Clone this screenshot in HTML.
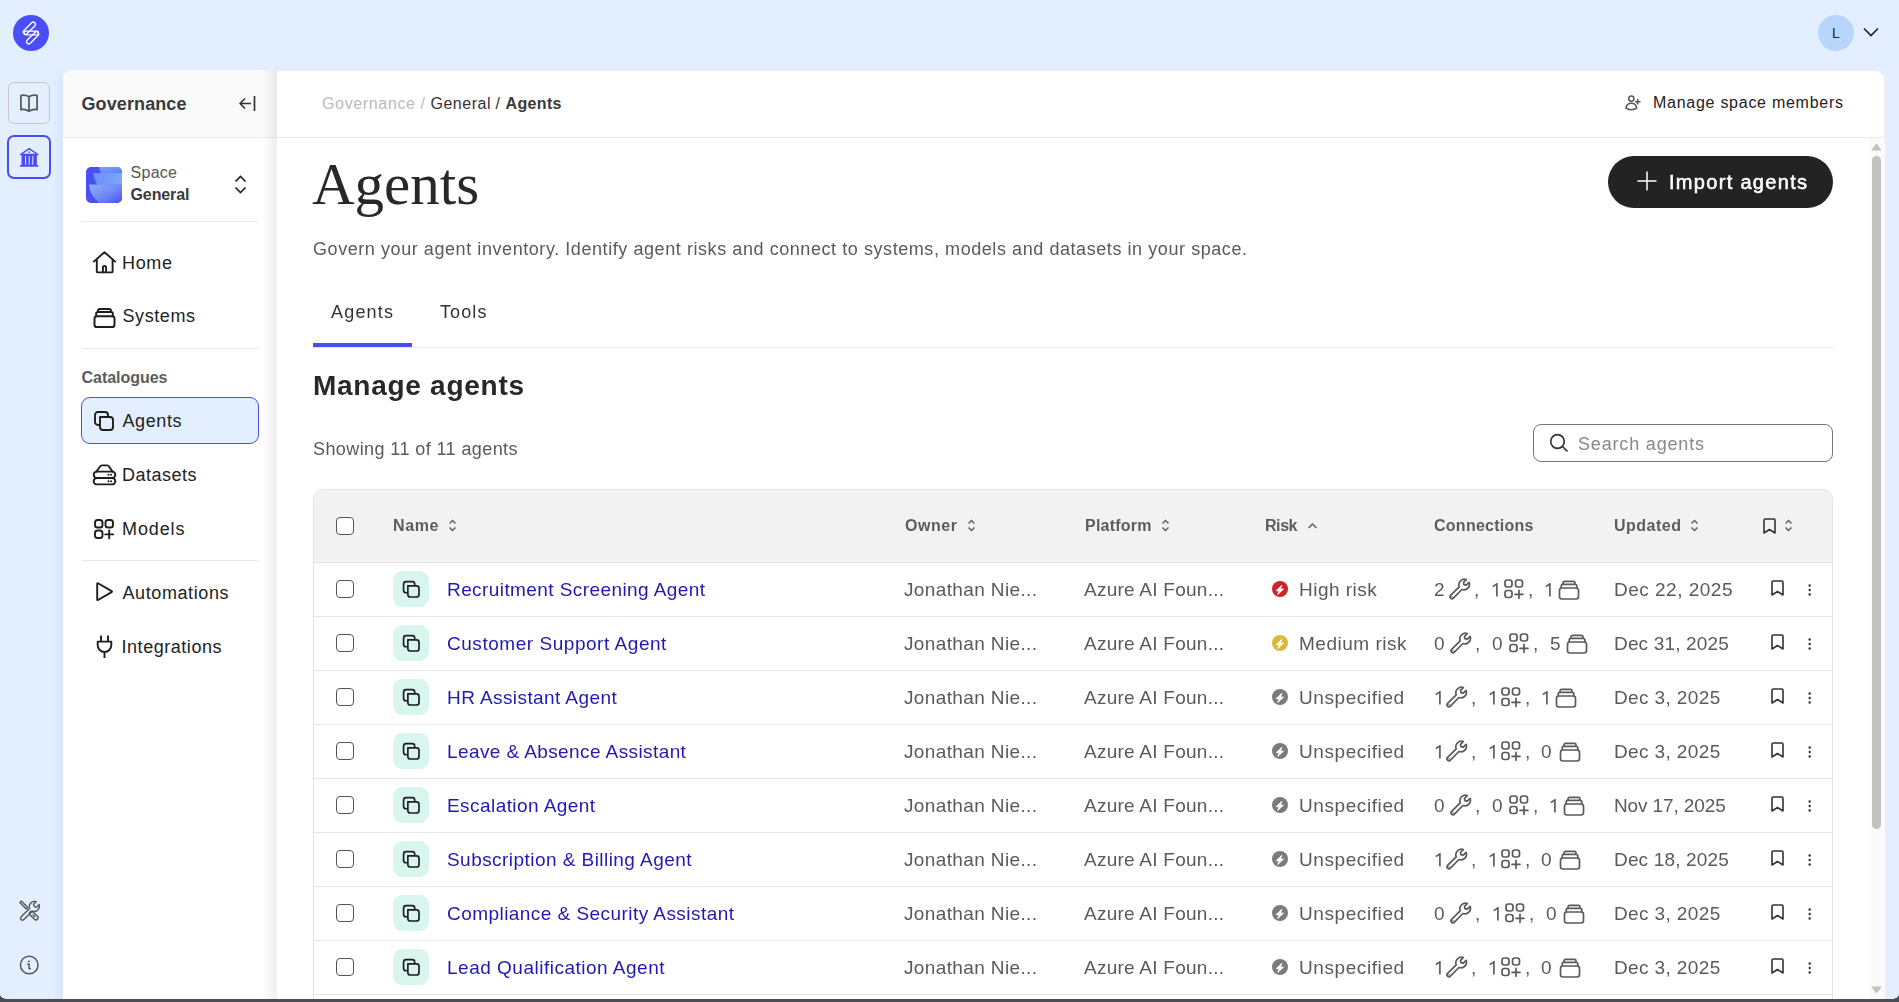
<!DOCTYPE html>
<html><head><meta charset="utf-8"><title>Agents</title>
<style>
html,body{margin:0;padding:0;}
body{width:1899px;height:1002px;overflow:hidden;position:relative;background:#e3effe;font-family:"Liberation Sans", sans-serif;}
.a{position:absolute;display:block;}
.t{position:absolute;white-space:nowrap;}
.g{will-change:transform;}
</style></head><body>
<div class="a" style="left:13px;top:15px;width:36px;height:36px;border-radius:50%;background:#4a4ef8;"></div>
<svg class="a" style="left:13px;top:15px;" width="36" height="36" viewBox="0 0 36 36" fill="none"><g stroke="#fff" stroke-width="1.3" fill="none" stroke-linejoin="round"><rect x="-2.2" y="-7.6" width="4.4" height="15.2" rx="2.2" transform="translate(16.4 13.2) rotate(45)"/><rect x="-2.2" y="-7.6" width="4.4" height="15.2" rx="2.2" transform="translate(19.6 22.8) rotate(45)"/><rect x="11" y="16.2" width="14.6" height="3.6" rx="1.8"/></g></svg>
<div class="a" style="left:8px;top:82px;width:42px;height:42px;box-sizing:border-box;border:1px solid #c8c5c2;border-radius:6px;"></div>
<svg class="a" style="left:18px;top:92px;" width="22" height="22" viewBox="0 0 22 22" fill="none"><path d="M2.9 3.5C5.6 2.9 8.4 3.2 11 4.8C13.6 3.2 16.4 2.9 19.1 3.5V17.6C16.4 17.1 13.6 17.5 11 19.2C8.4 17.5 5.6 17.1 2.9 17.6Z M11 4.8V19" stroke="#555" stroke-width="1.7" stroke-linejoin="round"/></svg>
<div class="a" style="left:7px;top:135px;width:44px;height:44px;box-sizing:border-box;border:2px solid #4a4cf5;border-radius:7px;"></div>
<svg class="a" style="left:18px;top:146px;" width="22" height="22" viewBox="0 0 22 22" fill="none"><path d="M2.6 8.5L11.2 2.7L19.8 8.5Z" stroke="#4a4cf5" stroke-width="1.5" stroke-linejoin="round"/><circle cx="11.2" cy="6.1" r=".95" fill="#4a4cf5"/><path d="M3.5 9H18.9V19.2H3.5Z" fill="#4a4cf5"/><path d="M7.6 10.4V18.4M11.2 10.4V18.4M14.8 10.4V18.4" stroke="#e3effe" stroke-width=".95" stroke-linecap="round"/><rect x="2" y="19" width="18.4" height="1.7" rx=".4" fill="#4a4cf5"/></svg>
<svg class="a" style="left:18px;top:899px;" width="22" height="24" viewBox="0 0 22 24" fill="none"><g stroke="#555" stroke-width="1.4" stroke-linejoin="round" fill="none"><path d="M1.8 3.6L3.4 2L9.8 8.4L8.2 10Z"/><rect x="-2.1" y="-5.2" width="4.2" height="10.4" rx="2.1" transform="translate(15.8 16.6) rotate(-45)"/><path d="M14.6 15.4L17.2 18"/><path d="M3.2 17.8L11.6 9.4C10.9 7.3 11.5 5 13.2 3.6C14.6 2.4 16.6 2.1 18.2 2.7L15.6 5.3L16.2 7.6L18.5 8.2L21.1 5.6C21.7 7.2 21.3 9.2 20.1 10.6C18.7 12.3 16.4 12.9 14.3 12.2L5.9 20.6C5.1 21.4 3.9 21.4 3.2 20.6C2.4 19.8 2.4 18.6 3.2 17.8Z"/></g></svg>
<svg class="a" style="left:18px;top:954px;" width="22" height="22" viewBox="0 0 22 22" fill="none"><circle cx="11.2" cy="11" r="8.8" stroke="#555" stroke-width="1.5"/><circle cx="10.9" cy="7.4" r="0.95" fill="#555"/><path d="M9.6 10.3H11.1V14.2C11.1 14.9 11.6 15 12.3 14.6" stroke="#555" stroke-width="1.4" stroke-linecap="round" stroke-linejoin="round"/></svg>
<div class="a" style="left:1818px;top:15px;width:36px;height:36px;border-radius:50%;background:#b8d6fc;"></div>
<div class="t" style="left:1832px;top:24.65px;font-size:14px;line-height:17px;font-weight:400;color:#222;">L</div>
<svg class="a" style="left:1862px;top:25px;" width="18" height="14" viewBox="0 0 18 14" fill="none"><path d="M2 3.5l7 7 7-7" stroke="#222" stroke-width="1.7"/></svg>
<div class="a" style="left:53px;top:68px;width:10px;height:940px;background:linear-gradient(90deg,rgba(90,140,240,0),rgba(90,140,240,.09));-webkit-mask-image:linear-gradient(180deg,transparent 0,#000 16px);"></div>
<div class="a" style="left:63px;top:69.5px;width:214px;height:940px;background:#fff;border-top-left-radius:9px;"></div>
<div class="a" style="left:63px;top:69.5px;width:214px;height:67.5px;background:#fafafa;border-top-left-radius:9px;"></div>
<div class="a" style="left:63px;top:137px;width:214px;height:1px;background:#e9e9e9;"></div>
<div class="a" style="left:262px;top:70px;width:15px;height:940px;background:linear-gradient(90deg,rgba(0,0,0,0),rgba(0,0,0,.065));"></div>
<div class="t" style="left:81.5px;top:92.76px;font-size:18px;line-height:22px;font-weight:700;color:#3a3a3a;letter-spacing:0.106px;">Governance</div>
<svg class="a" style="left:238px;top:95px;" width="19" height="17" viewBox="0 0 19 17" fill="none"><path d="M16.5 1v15" stroke="#333" stroke-width="1.7"/><path d="M2 8.5h11M7 3.5l-5 5 5 5" stroke="#333" stroke-width="1.6" stroke-linejoin="round"/></svg>
<svg class="a" style="left:86px;top:167px;" width="36" height="36" viewBox="0 0 36 36" fill="none"><defs><linearGradient id="sg1" x1="0" y1="0" x2="1" y2="1"><stop offset="0" stop-color="#7ea4f8"/><stop offset="1" stop-color="#5a7ef8"/></linearGradient><linearGradient id="sg3" x1="0" y1="0" x2="1" y2="0"><stop offset="0" stop-color="#6890f7"/><stop offset="1" stop-color="#7fa6f8"/></linearGradient><linearGradient id="sg2" x1="0" y1="0" x2="1" y2="1"><stop offset="0" stop-color="#8db2f8"/><stop offset=".55" stop-color="#6f88f6"/><stop offset="1" stop-color="#4a50f6"/></linearGradient><clipPath id="sc"><rect width="36" height="36" rx="5"/></clipPath></defs><g clip-path="url(#sc)"><rect width="36" height="36" fill="#4a4ff5"/><path d="M13 0H36V6H15C14 4 13.4 2 13 0Z" fill="url(#sg1)"/><path d="M7.2 5.9H36V17.7H11.2C9 14.5 7.6 10 7.2 5.9Z" fill="url(#sg3)"/><path d="M3 17.6H36V36H13.4C7.5 31.5 3.5 25 3 17.6Z" fill="url(#sg2)"/></g></svg>
<div class="t" style="left:130.5px;top:162.95px;font-size:16px;line-height:19px;font-weight:400;color:#555;letter-spacing:0.281px;">Space</div>
<div class="t" style="left:130.5px;top:185.45px;font-size:16px;line-height:19px;font-weight:700;color:#3a3a3a;letter-spacing:-0.099px;">General</div>
<svg class="a" style="left:233px;top:174px;" width="15" height="21" viewBox="0 0 15 21" fill="none"><path d="M2.5 7.5l5-5 5 5M2.5 13.5l5 5 5-5" stroke="#222" stroke-width="1.7"/></svg>
<div class="a" style="left:82px;top:221px;width:176px;height:1px;background:#e9e9e9;"></div>
<svg class="a" style="left:92px;top:250px;" width="26" height="26" viewBox="0 0 26 26" fill="none"><g stroke="#1e1e1e" stroke-width="1.9" stroke-linecap="round" stroke-linejoin="round" fill="none"><path d="M1.8 11.6L12.5 2.2L23.2 11.6M4.8 9.2V21.4a1 1 0 0 0 1 1H19.6a1 1 0 0 0 1-1V9.2"/><path d="M10.9 22.3V17.6a1.6 1.6 0 0 1 3.2 0V22.3"/></g></svg>
<div class="t" style="left:122px;top:251.76px;font-size:18px;line-height:22px;font-weight:400;color:#222;letter-spacing:0.661px;">Home</div>
<svg class="a" style="left:92px;top:304.5px;" width="25" height="25" viewBox="0 0 24 24" fill="none"><g stroke="#1e1e1e" stroke-width="1.9" stroke-linecap="round" stroke-linejoin="round" fill="none"><rect x="2.4" y="10.8" width="19.2" height="10.4" rx="2.3"/><path d="M4 10.8V8.4a1.6 1.6 0 0 1 1.6-1.6h12.8a1.6 1.6 0 0 1 1.6 1.6V10.8M5.8 6.8V5.4a1.6 1.6 0 0 1 1.6-1.6h9.2a1.6 1.6 0 0 1 1.6 1.6V6.8"/></g></svg>
<div class="t" style="left:122.5px;top:305.26px;font-size:18px;line-height:22px;font-weight:400;color:#222;letter-spacing:0.581px;">Systems</div>
<div class="a" style="left:82px;top:348px;width:176px;height:1px;background:#e9e9e9;"></div>
<div class="t" style="left:81.5px;top:367.95px;font-size:16px;line-height:19px;font-weight:700;color:#5c5c5c;letter-spacing:-0.028px;">Catalogues</div>
<div class="a" style="left:81px;top:397px;width:178px;height:47px;box-sizing:border-box;border:1px solid #4a4cf5;border-radius:9px;background:#e3effe;"></div>
<svg class="a" style="left:92px;top:409px;" width="24" height="24" viewBox="0 0 24 24" fill="none"><g stroke="#1e1e1e" stroke-width="1.9" stroke-linecap="round" stroke-linejoin="round" fill="none"><rect x="3" y="3" width="13" height="13" rx="3"/><path d="M8 8h10a3 3 0 0 1 3 3v7a3 3 0 0 1-3 3h-7a3 3 0 0 1-3-3z" fill="#e3effe"/></g></svg>
<div class="t" style="left:122.5px;top:409.76px;font-size:18px;line-height:22px;font-weight:400;color:#222;letter-spacing:0.591px;">Agents</div>
<svg class="a" style="left:92px;top:463px;" width="25" height="24" viewBox="0 0 25 24" fill="none"><g stroke="#1e1e1e" stroke-width="1.9" stroke-linecap="round" stroke-linejoin="round" fill="none"><path d="M4.4 8.6L8 3.5Q8.7 2.4 9.9 2.4H15.1Q16.3 2.4 17 3.5L20.6 8.6"/><rect x="1.7" y="8.6" width="21.6" height="6.4" rx="3.2"/><rect x="1.7" y="15" width="21.6" height="6.4" rx="3.2"/><g fill="#1e1e1e" stroke="none"><circle cx="16.5" cy="11.8" r="1.05"/><circle cx="19.1" cy="11.8" r="1.05"/><circle cx="16.5" cy="18.2" r="1.05"/><circle cx="19.1" cy="18.2" r="1.05"/></g></g></svg>
<div class="t" style="left:122px;top:463.76px;font-size:18px;line-height:22px;font-weight:400;color:#222;letter-spacing:0.493px;">Datasets</div>
<svg class="a" style="left:92px;top:517px;" width="24" height="24" viewBox="0 0 24 24" fill="none"><g stroke="#1e1e1e" stroke-width="1.9" stroke-linecap="round" stroke-linejoin="round" fill="none"><rect x="3" y="3" width="7.5" height="7.5" rx="2.6"/><rect x="13.5" y="3" width="7.5" height="7.5" rx="2.6"/><rect x="3" y="13.5" width="7.5" height="7.5" rx="2.6"/><path d="M17.2 13.4v8M13.2 17.4h8"/></g></svg>
<div class="t" style="left:122px;top:517.76px;font-size:18px;line-height:22px;font-weight:400;color:#222;letter-spacing:0.894px;">Models</div>
<div class="a" style="left:82px;top:560px;width:176px;height:1px;background:#e9e9e9;"></div>
<svg class="a" style="left:92px;top:580px;" width="24" height="24" viewBox="0 0 24 24" fill="none"><g stroke="#1e1e1e" stroke-width="1.9" stroke-linecap="round" stroke-linejoin="round" fill="none"><path d="M5.2 3.8Q5.2 2.9 6 3.3L19.6 11.1Q20.4 11.6 19.6 12.1L6 20Q5.2 20.4 5.2 19.5Z"/></g></svg>
<div class="t" style="left:122.5px;top:581.76px;font-size:18px;line-height:22px;font-weight:400;color:#222;letter-spacing:0.594px;">Automations</div>
<svg class="a" style="left:92px;top:634px;" width="25" height="25" viewBox="0 0 25 25" fill="none"><g stroke="#1e1e1e" stroke-width="1.9" stroke-linecap="round" stroke-linejoin="round" fill="none"><path d="M9 1.6v6M16 1.6v6M5.7 7.6h13.6v3.6a6.8 6.8 0 0 1-13.6 0zM12.5 18v6" stroke-linecap="butt"/></g></svg>
<div class="t" style="left:121.5px;top:635.76px;font-size:18px;line-height:22px;font-weight:400;color:#222;letter-spacing:0.54px;">Integrations</div>
<div class="a" style="left:277px;top:69.5px;width:1608px;height:940px;background:#fff;border-top-right-radius:9px;box-shadow:inset -1px 1px 0 #ededed;"></div>
<div class="a" style="left:277px;top:137px;width:1608px;height:1px;background:#e9e9e9;"></div>
<div class="t" style="left:322px;top:93.95px;font-size:16px;line-height:19px;font-weight:400;color:#bbb;letter-spacing:0.648px;">Governance</div>
<div class="t" style="left:420.5px;top:93.95px;font-size:16px;line-height:19px;font-weight:400;color:#bbb;">/</div>
<div class="t" style="left:430.5px;top:93.95px;font-size:16px;line-height:19px;font-weight:400;color:#333;letter-spacing:0.513px;">General</div>
<div class="t" style="left:495.5px;top:93.95px;font-size:16px;line-height:19px;font-weight:400;color:#333;">/</div>
<div class="t" style="left:505.5px;top:93.95px;font-size:16px;line-height:19px;font-weight:700;color:#3a3a3a;letter-spacing:0.353px;">Agents</div>
<svg class="a" style="left:1624px;top:94px;" width="18" height="18" viewBox="0 0 18 18" fill="none"><g stroke="#555" stroke-width="1.5" fill="none"><circle cx="7.3" cy="4.6" r="2.65"/><path d="M1.9 14.2C2.4 11 4.6 9.3 7.3 9.3S12.2 11 12.7 14.2C11 15.4 9.2 15.8 7.3 15.8S3.6 15.4 1.9 14.2Z" stroke-linejoin="round"/><path d="M13.75 5v5.6M10.95 7.8h5.6"/></g></svg>
<div class="t" style="left:1653px;top:92.95px;font-size:16px;line-height:19px;font-weight:400;color:#222;letter-spacing:0.732px;">Manage space members</div>
<div class="a" style="left:1869px;top:138px;width:16px;height:860px;background:#fafafa;"></div>
<svg class="a" style="left:1871px;top:143px;" width="11" height="8" viewBox="0 0 11 8" fill="none"><path d="M5.5 1L10 7H1z" fill="#c1c1c1" stroke="#c1c1c1" stroke-linejoin="round"/></svg>
<div class="a" style="left:1872px;top:156px;width:9px;height:673px;background:#c1c1c1;border-radius:4.5px;"></div>
<svg class="a" style="left:1871px;top:986px;" width="11" height="8" viewBox="0 0 11 8" fill="none"><path d="M1 1h9L5.5 7z" fill="#c1c1c1" stroke="#c1c1c1" stroke-linejoin="round"/></svg>
<div class="t g" style="left:312px;top:148.59px;font-size:59px;line-height:71px;font-weight:400;color:#282828;font-family:'Liberation Serif', serif;">Agents</div>
<div class="a" style="left:1608px;top:156px;width:225px;height:52px;background:#232323;border-radius:26px;"></div>
<svg class="a" style="left:1636.5px;top:171.4px;" width="20" height="20" viewBox="0 0 20 20" fill="none"><path d="M10 .5v19M.5 10h19" stroke="#fff" stroke-width="1.5"/></svg>
<div class="t g" style="left:1669px;top:170.07px;font-size:20px;line-height:24px;font-weight:400;color:#fff;letter-spacing:1.309px;-webkit-text-stroke:0.55px #fff;">Import agents</div>
<div class="t g" style="left:313px;top:237.76px;font-size:18px;line-height:22px;font-weight:400;color:#5a5a5a;letter-spacing:0.569px;">Govern your agent inventory. Identify agent risks and connect to systems, models and datasets in your space.</div>
<div class="t g" style="left:331px;top:300.76px;font-size:18px;line-height:22px;font-weight:400;color:#333;letter-spacing:1.191px;">Agents</div>
<div class="t g" style="left:439.5px;top:300.76px;font-size:18px;line-height:22px;font-weight:400;color:#333;letter-spacing:1.117px;">Tools</div>
<div class="a" style="left:313px;top:347px;width:1520px;height:1px;background:#e6e6e6;"></div>
<div class="a" style="left:313px;top:343px;width:99px;height:4px;background:#4a4cf5;"></div>
<div class="t g" style="left:313px;top:368.59px;font-size:28px;line-height:34px;font-weight:700;color:#282828;letter-spacing:0.727px;">Manage agents</div>
<div class="t g" style="left:313px;top:437.76px;font-size:18px;line-height:22px;font-weight:400;color:#5a5a5a;letter-spacing:0.41px;">Showing 11 of 11 agents</div>
<div class="a" style="left:1533px;top:424px;width:300px;height:38px;box-sizing:border-box;border:1px solid #777;border-radius:8px;"></div>
<svg class="a" style="left:1548px;top:432px;" width="22" height="22" viewBox="0 0 22 22" fill="none"><circle cx="9.5" cy="9.5" r="6.8" stroke="#333" stroke-width="1.7"/><path d="M14.5 14.5l5 5" stroke="#333" stroke-width="1.7"/></svg>
<div class="t g" style="left:1578px;top:432.76px;font-size:18px;line-height:22px;font-weight:400;color:#888;letter-spacing:0.827px;">Search agents</div>
<div class="a" style="left:313px;top:489px;width:1520px;height:560px;box-sizing:border-box;border:1px solid #e2e2e2;border-radius:10px;"></div>
<div class="a" style="left:314px;top:490px;width:1518px;height:72px;background:#f2f2f2;border-top-left-radius:9px;border-top-right-radius:9px;"></div>
<div class="a" style="left:314px;top:562px;width:1518px;height:1px;background:#e2e2e2;"></div>
<div class="a" style="left:336px;top:517px;width:18px;height:18px;box-sizing:border-box;border:1.5px solid #555;border-radius:4px;background:#fff;"></div>
<div class="t g" style="left:392.5px;top:516.45px;font-size:16px;line-height:19px;font-weight:700;color:#5c5c5c;letter-spacing:0.641px;">Name</div>
<svg class="a" style="left:448px;top:519px;" width="9" height="13" viewBox="0 0 9 13" fill="none"><path d="M1.5 4.5L4.5 1.5l3 3M1.5 8.5l3 3 3-3" stroke="#5a5a5a" stroke-width="1.4" fill="none"/></svg>
<div class="t g" style="left:904.5px;top:516.45px;font-size:16px;line-height:19px;font-weight:700;color:#5c5c5c;letter-spacing:0.551px;">Owner</div>
<svg class="a" style="left:967px;top:519px;" width="9" height="13" viewBox="0 0 9 13" fill="none"><path d="M1.5 4.5L4.5 1.5l3 3M1.5 8.5l3 3 3-3" stroke="#5a5a5a" stroke-width="1.4" fill="none"/></svg>
<div class="t g" style="left:1084.5px;top:516.45px;font-size:16px;line-height:19px;font-weight:700;color:#5c5c5c;letter-spacing:0.228px;">Platform</div>
<svg class="a" style="left:1161px;top:519px;" width="9" height="13" viewBox="0 0 9 13" fill="none"><path d="M1.5 4.5L4.5 1.5l3 3M1.5 8.5l3 3 3-3" stroke="#5a5a5a" stroke-width="1.4" fill="none"/></svg>
<div class="t g" style="left:1264.5px;top:516.45px;font-size:16px;line-height:19px;font-weight:700;color:#5c5c5c;letter-spacing:-0.432px;">Risk</div>
<svg class="a" style="left:1307px;top:521px;" width="11" height="9" viewBox="0 0 11 9" fill="none"><path d="M1.5 7l4-4 4 4" stroke="#5a5a5a" stroke-width="1.4" fill="none"/></svg>
<div class="t g" style="left:1433.5px;top:516.45px;font-size:16px;line-height:19px;font-weight:700;color:#5c5c5c;letter-spacing:0.261px;">Connections</div>
<div class="t g" style="left:1613.5px;top:516.45px;font-size:16px;line-height:19px;font-weight:700;color:#5c5c5c;letter-spacing:0.5px;">Updated</div>
<svg class="a" style="left:1690px;top:519px;" width="9" height="13" viewBox="0 0 9 13" fill="none"><path d="M1.5 4.5L4.5 1.5l3 3M1.5 8.5l3 3 3-3" stroke="#5a5a5a" stroke-width="1.4" fill="none"/></svg>
<svg class="a" style="left:1762px;top:518px;" width="15" height="17" viewBox="0 0 15 17" fill="none"><path d="M2 2.2a1.2 1.2 0 0 1 1.2-1.2h8.6a1.2 1.2 0 0 1 1.2 1.2V15L7.5 11.5 2 15z" stroke="#333" stroke-width="1.6" stroke-linejoin="round" fill="none"/></svg>
<svg class="a" style="left:1784px;top:519px;" width="9" height="13" viewBox="0 0 9 13" fill="none"><path d="M1.5 4.5L4.5 1.5l3 3M1.5 8.5l3 3 3-3" stroke="#5a5a5a" stroke-width="1.4" fill="none"/></svg>
<div class="a" style="left:314px;top:616px;width:1518px;height:1px;background:#e6e6e6;"></div>
<div class="a" style="left:336px;top:580px;width:18px;height:18px;box-sizing:border-box;border:1.5px solid #555;border-radius:4px;background:#fff;"></div>
<div class="a" style="left:393px;top:571px;width:36px;height:36px;background:#d8f5ee;border-radius:9px;"></div>
<svg class="a" style="left:400.8px;top:578.8px;" width="20.6" height="20.6" viewBox="0 0 24 24" fill="none"><g stroke="#1e1e1e" stroke-width="1.95" fill="none" stroke-linejoin="round"><rect x="3" y="3" width="13" height="13" rx="3"/><path d="M8 8h10a3 3 0 0 1 3 3v7a3 3 0 0 1-3 3h-7a3 3 0 0 1-3-3z" fill="#d8f5ee"/></g></svg>
<div class="t g" style="left:446.5px;top:577.91px;font-size:19px;line-height:23px;font-weight:400;color:#2219b5;letter-spacing:0.418px;">Recruitment Screening Agent</div>
<div class="t g" style="left:904px;top:577.91px;font-size:19px;line-height:23px;font-weight:400;color:#5a5a5a;letter-spacing:0.371px;">Jonathan Nie...</div>
<div class="t g" style="left:1084px;top:577.91px;font-size:19px;line-height:23px;font-weight:400;color:#5a5a5a;letter-spacing:0.25px;">Azure AI Foun...</div>
<svg class="a" style="left:1271.6px;top:581.4px;" width="16" height="16" viewBox="0 0 16 16" fill="none"><circle cx="8" cy="8" r="8" fill="#cf2129"/><path d="M9.9 4.3L4.1 9.7H7.3L5.7 13.5L11.5 8.1H8.3Z" fill="#fff" stroke="#fff" stroke-width=".9" stroke-linejoin="round"/></svg>
<div class="t g" style="left:1298.5px;top:577.91px;font-size:19px;line-height:23px;font-weight:400;color:#5a5a5a;letter-spacing:0.474px;">High risk</div>
<div class="t g" style="left:1433.9px;top:577.91px;font-size:19px;line-height:23px;font-weight:400;color:#5a5a5a;">2</div>
<svg class="a" style="left:1447.9px;top:575.6px;" width="24" height="24" viewBox="0 0 24 24" fill="none"><path d="M2.6 19.4L11.2 10.8C10.4 8.6 11 6.1 12.8 4.6C14.3 3.3 16.5 2.9 18.3 3.6L15.5 6.4L16 8.7L18.3 9.2L21.1 6.4C21.8 8.2 21.4 10.4 20.1 11.9C18.6 13.7 16.1 14.3 13.9 13.5L5.4 22.1C4.6 22.9 3.4 22.9 2.6 22.1C1.8 21.3 1.8 20.2 2.6 19.4Z" stroke="#5a5a5a" stroke-width="1.7" stroke-linejoin="round" fill="none"/><circle cx="4" cy="20.7" r=".7" fill="#5a5a5a"/></svg>
<div class="t g" style="left:1474.4px;top:577.91px;font-size:19px;line-height:23px;font-weight:400;color:#5a5a5a;">,</div>
<svg class="a" style="left:1491.7px;top:582.6px;" width="7" height="14" viewBox="0 0 7 14" fill="none"><path d="M0.8 3.6L4.9 0.9V13.4" stroke="#5a5a5a" stroke-width="1.65" fill="none"/></svg>
<svg class="a" style="left:1502.1px;top:577.3px;" width="24" height="24" viewBox="0 0 24 24" fill="none"><g stroke="#5a5a5a" stroke-width="1.7" fill="none" stroke-linecap="round"><rect x="3" y="3" width="7" height="7" rx="2.4"/><rect x="13.5" y="3" width="7" height="7" rx="2.4"/><rect x="3" y="13.5" width="7" height="7" rx="2.4"/><path d="M17 13.3v8M13 17.3h8"/></g></svg>
<div class="t g" style="left:1528.2px;top:577.91px;font-size:19px;line-height:23px;font-weight:400;color:#5a5a5a;">,</div>
<svg class="a" style="left:1545.4px;top:582.6px;" width="7" height="14" viewBox="0 0 7 14" fill="none"><path d="M0.8 3.6L4.9 0.9V13.4" stroke="#5a5a5a" stroke-width="1.65" fill="none"/></svg>
<svg class="a" style="left:1556.8px;top:577.8px;" width="24" height="24" viewBox="0 0 24 24" fill="none"><g stroke="#5a5a5a" stroke-width="1.7" fill="none" stroke-linejoin="round"><rect x="2.5" y="10" width="19" height="11" rx="2.4"/><path d="M4.2 10V8a1.6 1.6 0 0 1 1.6-1.6h12.4a1.6 1.6 0 0 1 1.6 1.6v2M6 6.4V5a1.6 1.6 0 0 1 1.6-1.6h8.8A1.6 1.6 0 0 1 18 5v1.4"/></g></svg>
<div class="t g" style="left:1613.5px;top:577.91px;font-size:19px;line-height:23px;font-weight:400;color:#5a5a5a;letter-spacing:0.497px;">Dec 22, 2025</div>
<svg class="a" style="left:1770px;top:580px;" width="15" height="17" viewBox="0 0 15 17" fill="none"><path d="M2 2.2a1.2 1.2 0 0 1 1.2-1.2h8.6a1.2 1.2 0 0 1 1.2 1.2V15L7.5 11.5 2 15z" stroke="#333" stroke-width="1.6" stroke-linejoin="round" fill="none"/></svg>
<svg class="a" style="left:1808.3px;top:583px;" width="4" height="14" viewBox="0 0 4 14" fill="none"><circle cx="1.7" cy="2.5" r="1.2" fill="#333"/><circle cx="1.7" cy="7" r="1.2" fill="#333"/><circle cx="1.7" cy="11.5" r="1.2" fill="#333"/></svg>
<div class="a" style="left:314px;top:670px;width:1518px;height:1px;background:#e6e6e6;"></div>
<div class="a" style="left:336px;top:634px;width:18px;height:18px;box-sizing:border-box;border:1.5px solid #555;border-radius:4px;background:#fff;"></div>
<div class="a" style="left:393px;top:625px;width:36px;height:36px;background:#d8f5ee;border-radius:9px;"></div>
<svg class="a" style="left:400.8px;top:632.8px;" width="20.6" height="20.6" viewBox="0 0 24 24" fill="none"><g stroke="#1e1e1e" stroke-width="1.95" fill="none" stroke-linejoin="round"><rect x="3" y="3" width="13" height="13" rx="3"/><path d="M8 8h10a3 3 0 0 1 3 3v7a3 3 0 0 1-3 3h-7a3 3 0 0 1-3-3z" fill="#d8f5ee"/></g></svg>
<div class="t g" style="left:446.5px;top:631.91px;font-size:19px;line-height:23px;font-weight:400;color:#2219b5;letter-spacing:0.539px;">Customer Support Agent</div>
<div class="t g" style="left:904px;top:631.91px;font-size:19px;line-height:23px;font-weight:400;color:#5a5a5a;letter-spacing:0.371px;">Jonathan Nie...</div>
<div class="t g" style="left:1084px;top:631.91px;font-size:19px;line-height:23px;font-weight:400;color:#5a5a5a;letter-spacing:0.25px;">Azure AI Foun...</div>
<svg class="a" style="left:1271.6px;top:635.4px;" width="16" height="16" viewBox="0 0 16 16" fill="none"><circle cx="8" cy="8" r="8" fill="#d9b83a"/><path d="M9.9 4.3L4.1 9.7H7.3L5.7 13.5L11.5 8.1H8.3Z" fill="#fff" stroke="#fff" stroke-width=".9" stroke-linejoin="round"/></svg>
<div class="t g" style="left:1298.5px;top:631.91px;font-size:19px;line-height:23px;font-weight:400;color:#5a5a5a;letter-spacing:0.509px;">Medium risk</div>
<div class="t g" style="left:1433.9px;top:631.91px;font-size:19px;line-height:23px;font-weight:400;color:#5a5a5a;">0</div>
<svg class="a" style="left:1448.8px;top:629.6px;" width="24" height="24" viewBox="0 0 24 24" fill="none"><path d="M2.6 19.4L11.2 10.8C10.4 8.6 11 6.1 12.8 4.6C14.3 3.3 16.5 2.9 18.3 3.6L15.5 6.4L16 8.7L18.3 9.2L21.1 6.4C21.8 8.2 21.4 10.4 20.1 11.9C18.6 13.7 16.1 14.3 13.9 13.5L5.4 22.1C4.6 22.9 3.4 22.9 2.6 22.1C1.8 21.3 1.8 20.2 2.6 19.4Z" stroke="#5a5a5a" stroke-width="1.7" stroke-linejoin="round" fill="none"/><circle cx="4" cy="20.7" r=".7" fill="#5a5a5a"/></svg>
<div class="t g" style="left:1475.3px;top:631.91px;font-size:19px;line-height:23px;font-weight:400;color:#5a5a5a;">,</div>
<div class="t g" style="left:1491.8px;top:631.91px;font-size:19px;line-height:23px;font-weight:400;color:#5a5a5a;">0</div>
<svg class="a" style="left:1507.1px;top:631.3px;" width="24" height="24" viewBox="0 0 24 24" fill="none"><g stroke="#5a5a5a" stroke-width="1.7" fill="none" stroke-linecap="round"><rect x="3" y="3" width="7" height="7" rx="2.4"/><rect x="13.5" y="3" width="7" height="7" rx="2.4"/><rect x="3" y="13.5" width="7" height="7" rx="2.4"/><path d="M17 13.3v8M13 17.3h8"/></g></svg>
<div class="t g" style="left:1533.2px;top:631.91px;font-size:19px;line-height:23px;font-weight:400;color:#5a5a5a;">,</div>
<div class="t g" style="left:1549.6px;top:631.91px;font-size:19px;line-height:23px;font-weight:400;color:#5a5a5a;">5</div>
<svg class="a" style="left:1565.4px;top:631.8px;" width="24" height="24" viewBox="0 0 24 24" fill="none"><g stroke="#5a5a5a" stroke-width="1.7" fill="none" stroke-linejoin="round"><rect x="2.5" y="10" width="19" height="11" rx="2.4"/><path d="M4.2 10V8a1.6 1.6 0 0 1 1.6-1.6h12.4a1.6 1.6 0 0 1 1.6 1.6v2M6 6.4V5a1.6 1.6 0 0 1 1.6-1.6h8.8A1.6 1.6 0 0 1 18 5v1.4"/></g></svg>
<div class="t g" style="left:1613.5px;top:631.91px;font-size:19px;line-height:23px;font-weight:400;color:#5a5a5a;letter-spacing:0.161px;">Dec 31, 2025</div>
<svg class="a" style="left:1770px;top:634px;" width="15" height="17" viewBox="0 0 15 17" fill="none"><path d="M2 2.2a1.2 1.2 0 0 1 1.2-1.2h8.6a1.2 1.2 0 0 1 1.2 1.2V15L7.5 11.5 2 15z" stroke="#333" stroke-width="1.6" stroke-linejoin="round" fill="none"/></svg>
<svg class="a" style="left:1808.3px;top:637px;" width="4" height="14" viewBox="0 0 4 14" fill="none"><circle cx="1.7" cy="2.5" r="1.2" fill="#333"/><circle cx="1.7" cy="7" r="1.2" fill="#333"/><circle cx="1.7" cy="11.5" r="1.2" fill="#333"/></svg>
<div class="a" style="left:314px;top:724px;width:1518px;height:1px;background:#e6e6e6;"></div>
<div class="a" style="left:336px;top:688px;width:18px;height:18px;box-sizing:border-box;border:1.5px solid #555;border-radius:4px;background:#fff;"></div>
<div class="a" style="left:393px;top:679px;width:36px;height:36px;background:#d8f5ee;border-radius:9px;"></div>
<svg class="a" style="left:400.8px;top:686.8px;" width="20.6" height="20.6" viewBox="0 0 24 24" fill="none"><g stroke="#1e1e1e" stroke-width="1.95" fill="none" stroke-linejoin="round"><rect x="3" y="3" width="13" height="13" rx="3"/><path d="M8 8h10a3 3 0 0 1 3 3v7a3 3 0 0 1-3 3h-7a3 3 0 0 1-3-3z" fill="#d8f5ee"/></g></svg>
<div class="t g" style="left:446.5px;top:685.91px;font-size:19px;line-height:23px;font-weight:400;color:#2219b5;letter-spacing:0.414px;">HR Assistant Agent</div>
<div class="t g" style="left:904px;top:685.91px;font-size:19px;line-height:23px;font-weight:400;color:#5a5a5a;letter-spacing:0.371px;">Jonathan Nie...</div>
<div class="t g" style="left:1084px;top:685.91px;font-size:19px;line-height:23px;font-weight:400;color:#5a5a5a;letter-spacing:0.25px;">Azure AI Foun...</div>
<svg class="a" style="left:1271.6px;top:689.4px;" width="16" height="16" viewBox="0 0 16 16" fill="none"><circle cx="8" cy="8" r="8" fill="#7b7b7b"/><path d="M9.9 4.3L4.1 9.7H7.3L5.7 13.5L11.5 8.1H8.3Z" fill="#fff" stroke="#fff" stroke-width=".9" stroke-linejoin="round"/></svg>
<div class="t g" style="left:1298.5px;top:685.91px;font-size:19px;line-height:23px;font-weight:400;color:#5a5a5a;letter-spacing:0.582px;">Unspecified</div>
<svg class="a" style="left:1434.7px;top:690.6px;" width="7" height="14" viewBox="0 0 7 14" fill="none"><path d="M0.8 3.6L4.9 0.9V13.4" stroke="#5a5a5a" stroke-width="1.65" fill="none"/></svg>
<svg class="a" style="left:1444.7px;top:683.6px;" width="24" height="24" viewBox="0 0 24 24" fill="none"><path d="M2.6 19.4L11.2 10.8C10.4 8.6 11 6.1 12.8 4.6C14.3 3.3 16.5 2.9 18.3 3.6L15.5 6.4L16 8.7L18.3 9.2L21.1 6.4C21.8 8.2 21.4 10.4 20.1 11.9C18.6 13.7 16.1 14.3 13.9 13.5L5.4 22.1C4.6 22.9 3.4 22.9 2.6 22.1C1.8 21.3 1.8 20.2 2.6 19.4Z" stroke="#5a5a5a" stroke-width="1.7" stroke-linejoin="round" fill="none"/><circle cx="4" cy="20.7" r=".7" fill="#5a5a5a"/></svg>
<div class="t g" style="left:1471.2px;top:685.91px;font-size:19px;line-height:23px;font-weight:400;color:#5a5a5a;">,</div>
<svg class="a" style="left:1488.5px;top:690.6px;" width="7" height="14" viewBox="0 0 7 14" fill="none"><path d="M0.8 3.6L4.9 0.9V13.4" stroke="#5a5a5a" stroke-width="1.65" fill="none"/></svg>
<svg class="a" style="left:1498.9px;top:685.3px;" width="24" height="24" viewBox="0 0 24 24" fill="none"><g stroke="#5a5a5a" stroke-width="1.7" fill="none" stroke-linecap="round"><rect x="3" y="3" width="7" height="7" rx="2.4"/><rect x="13.5" y="3" width="7" height="7" rx="2.4"/><rect x="3" y="13.5" width="7" height="7" rx="2.4"/><path d="M17 13.3v8M13 17.3h8"/></g></svg>
<div class="t g" style="left:1525.0px;top:685.91px;font-size:19px;line-height:23px;font-weight:400;color:#5a5a5a;">,</div>
<svg class="a" style="left:1542.2px;top:690.6px;" width="7" height="14" viewBox="0 0 7 14" fill="none"><path d="M0.8 3.6L4.9 0.9V13.4" stroke="#5a5a5a" stroke-width="1.65" fill="none"/></svg>
<svg class="a" style="left:1553.6px;top:685.8px;" width="24" height="24" viewBox="0 0 24 24" fill="none"><g stroke="#5a5a5a" stroke-width="1.7" fill="none" stroke-linejoin="round"><rect x="2.5" y="10" width="19" height="11" rx="2.4"/><path d="M4.2 10V8a1.6 1.6 0 0 1 1.6-1.6h12.4a1.6 1.6 0 0 1 1.6 1.6v2M6 6.4V5a1.6 1.6 0 0 1 1.6-1.6h8.8A1.6 1.6 0 0 1 18 5v1.4"/></g></svg>
<div class="t g" style="left:1613.5px;top:685.91px;font-size:19px;line-height:23px;font-weight:400;color:#5a5a5a;letter-spacing:0.383px;">Dec 3, 2025</div>
<svg class="a" style="left:1770px;top:688px;" width="15" height="17" viewBox="0 0 15 17" fill="none"><path d="M2 2.2a1.2 1.2 0 0 1 1.2-1.2h8.6a1.2 1.2 0 0 1 1.2 1.2V15L7.5 11.5 2 15z" stroke="#333" stroke-width="1.6" stroke-linejoin="round" fill="none"/></svg>
<svg class="a" style="left:1808.3px;top:691px;" width="4" height="14" viewBox="0 0 4 14" fill="none"><circle cx="1.7" cy="2.5" r="1.2" fill="#333"/><circle cx="1.7" cy="7" r="1.2" fill="#333"/><circle cx="1.7" cy="11.5" r="1.2" fill="#333"/></svg>
<div class="a" style="left:314px;top:778px;width:1518px;height:1px;background:#e6e6e6;"></div>
<div class="a" style="left:336px;top:742px;width:18px;height:18px;box-sizing:border-box;border:1.5px solid #555;border-radius:4px;background:#fff;"></div>
<div class="a" style="left:393px;top:733px;width:36px;height:36px;background:#d8f5ee;border-radius:9px;"></div>
<svg class="a" style="left:400.8px;top:740.8px;" width="20.6" height="20.6" viewBox="0 0 24 24" fill="none"><g stroke="#1e1e1e" stroke-width="1.95" fill="none" stroke-linejoin="round"><rect x="3" y="3" width="13" height="13" rx="3"/><path d="M8 8h10a3 3 0 0 1 3 3v7a3 3 0 0 1-3 3h-7a3 3 0 0 1-3-3z" fill="#d8f5ee"/></g></svg>
<div class="t g" style="left:446.5px;top:739.91px;font-size:19px;line-height:23px;font-weight:400;color:#2219b5;letter-spacing:0.403px;">Leave &amp; Absence Assistant</div>
<div class="t g" style="left:904px;top:739.91px;font-size:19px;line-height:23px;font-weight:400;color:#5a5a5a;letter-spacing:0.371px;">Jonathan Nie...</div>
<div class="t g" style="left:1084px;top:739.91px;font-size:19px;line-height:23px;font-weight:400;color:#5a5a5a;letter-spacing:0.25px;">Azure AI Foun...</div>
<svg class="a" style="left:1271.6px;top:743.4px;" width="16" height="16" viewBox="0 0 16 16" fill="none"><circle cx="8" cy="8" r="8" fill="#7b7b7b"/><path d="M9.9 4.3L4.1 9.7H7.3L5.7 13.5L11.5 8.1H8.3Z" fill="#fff" stroke="#fff" stroke-width=".9" stroke-linejoin="round"/></svg>
<div class="t g" style="left:1298.5px;top:739.91px;font-size:19px;line-height:23px;font-weight:400;color:#5a5a5a;letter-spacing:0.582px;">Unspecified</div>
<svg class="a" style="left:1434.7px;top:744.6px;" width="7" height="14" viewBox="0 0 7 14" fill="none"><path d="M0.8 3.6L4.9 0.9V13.4" stroke="#5a5a5a" stroke-width="1.65" fill="none"/></svg>
<svg class="a" style="left:1444.7px;top:737.6px;" width="24" height="24" viewBox="0 0 24 24" fill="none"><path d="M2.6 19.4L11.2 10.8C10.4 8.6 11 6.1 12.8 4.6C14.3 3.3 16.5 2.9 18.3 3.6L15.5 6.4L16 8.7L18.3 9.2L21.1 6.4C21.8 8.2 21.4 10.4 20.1 11.9C18.6 13.7 16.1 14.3 13.9 13.5L5.4 22.1C4.6 22.9 3.4 22.9 2.6 22.1C1.8 21.3 1.8 20.2 2.6 19.4Z" stroke="#5a5a5a" stroke-width="1.7" stroke-linejoin="round" fill="none"/><circle cx="4" cy="20.7" r=".7" fill="#5a5a5a"/></svg>
<div class="t g" style="left:1471.2px;top:739.91px;font-size:19px;line-height:23px;font-weight:400;color:#5a5a5a;">,</div>
<svg class="a" style="left:1488.5px;top:744.6px;" width="7" height="14" viewBox="0 0 7 14" fill="none"><path d="M0.8 3.6L4.9 0.9V13.4" stroke="#5a5a5a" stroke-width="1.65" fill="none"/></svg>
<svg class="a" style="left:1498.9px;top:739.3px;" width="24" height="24" viewBox="0 0 24 24" fill="none"><g stroke="#5a5a5a" stroke-width="1.7" fill="none" stroke-linecap="round"><rect x="3" y="3" width="7" height="7" rx="2.4"/><rect x="13.5" y="3" width="7" height="7" rx="2.4"/><rect x="3" y="13.5" width="7" height="7" rx="2.4"/><path d="M17 13.3v8M13 17.3h8"/></g></svg>
<div class="t g" style="left:1525.0px;top:739.91px;font-size:19px;line-height:23px;font-weight:400;color:#5a5a5a;">,</div>
<div class="t g" style="left:1541.4px;top:739.91px;font-size:19px;line-height:23px;font-weight:400;color:#5a5a5a;">0</div>
<svg class="a" style="left:1557.7px;top:739.8px;" width="24" height="24" viewBox="0 0 24 24" fill="none"><g stroke="#5a5a5a" stroke-width="1.7" fill="none" stroke-linejoin="round"><rect x="2.5" y="10" width="19" height="11" rx="2.4"/><path d="M4.2 10V8a1.6 1.6 0 0 1 1.6-1.6h12.4a1.6 1.6 0 0 1 1.6 1.6v2M6 6.4V5a1.6 1.6 0 0 1 1.6-1.6h8.8A1.6 1.6 0 0 1 18 5v1.4"/></g></svg>
<div class="t g" style="left:1613.5px;top:739.91px;font-size:19px;line-height:23px;font-weight:400;color:#5a5a5a;letter-spacing:0.383px;">Dec 3, 2025</div>
<svg class="a" style="left:1770px;top:742px;" width="15" height="17" viewBox="0 0 15 17" fill="none"><path d="M2 2.2a1.2 1.2 0 0 1 1.2-1.2h8.6a1.2 1.2 0 0 1 1.2 1.2V15L7.5 11.5 2 15z" stroke="#333" stroke-width="1.6" stroke-linejoin="round" fill="none"/></svg>
<svg class="a" style="left:1808.3px;top:745px;" width="4" height="14" viewBox="0 0 4 14" fill="none"><circle cx="1.7" cy="2.5" r="1.2" fill="#333"/><circle cx="1.7" cy="7" r="1.2" fill="#333"/><circle cx="1.7" cy="11.5" r="1.2" fill="#333"/></svg>
<div class="a" style="left:314px;top:832px;width:1518px;height:1px;background:#e6e6e6;"></div>
<div class="a" style="left:336px;top:796px;width:18px;height:18px;box-sizing:border-box;border:1.5px solid #555;border-radius:4px;background:#fff;"></div>
<div class="a" style="left:393px;top:787px;width:36px;height:36px;background:#d8f5ee;border-radius:9px;"></div>
<svg class="a" style="left:400.8px;top:794.8px;" width="20.6" height="20.6" viewBox="0 0 24 24" fill="none"><g stroke="#1e1e1e" stroke-width="1.95" fill="none" stroke-linejoin="round"><rect x="3" y="3" width="13" height="13" rx="3"/><path d="M8 8h10a3 3 0 0 1 3 3v7a3 3 0 0 1-3 3h-7a3 3 0 0 1-3-3z" fill="#d8f5ee"/></g></svg>
<div class="t g" style="left:446.5px;top:793.91px;font-size:19px;line-height:23px;font-weight:400;color:#2219b5;letter-spacing:0.437px;">Escalation Agent</div>
<div class="t g" style="left:904px;top:793.91px;font-size:19px;line-height:23px;font-weight:400;color:#5a5a5a;letter-spacing:0.371px;">Jonathan Nie...</div>
<div class="t g" style="left:1084px;top:793.91px;font-size:19px;line-height:23px;font-weight:400;color:#5a5a5a;letter-spacing:0.25px;">Azure AI Foun...</div>
<svg class="a" style="left:1271.6px;top:797.4px;" width="16" height="16" viewBox="0 0 16 16" fill="none"><circle cx="8" cy="8" r="8" fill="#7b7b7b"/><path d="M9.9 4.3L4.1 9.7H7.3L5.7 13.5L11.5 8.1H8.3Z" fill="#fff" stroke="#fff" stroke-width=".9" stroke-linejoin="round"/></svg>
<div class="t g" style="left:1298.5px;top:793.91px;font-size:19px;line-height:23px;font-weight:400;color:#5a5a5a;letter-spacing:0.582px;">Unspecified</div>
<div class="t g" style="left:1433.9px;top:793.91px;font-size:19px;line-height:23px;font-weight:400;color:#5a5a5a;">0</div>
<svg class="a" style="left:1448.8px;top:791.6px;" width="24" height="24" viewBox="0 0 24 24" fill="none"><path d="M2.6 19.4L11.2 10.8C10.4 8.6 11 6.1 12.8 4.6C14.3 3.3 16.5 2.9 18.3 3.6L15.5 6.4L16 8.7L18.3 9.2L21.1 6.4C21.8 8.2 21.4 10.4 20.1 11.9C18.6 13.7 16.1 14.3 13.9 13.5L5.4 22.1C4.6 22.9 3.4 22.9 2.6 22.1C1.8 21.3 1.8 20.2 2.6 19.4Z" stroke="#5a5a5a" stroke-width="1.7" stroke-linejoin="round" fill="none"/><circle cx="4" cy="20.7" r=".7" fill="#5a5a5a"/></svg>
<div class="t g" style="left:1475.3px;top:793.91px;font-size:19px;line-height:23px;font-weight:400;color:#5a5a5a;">,</div>
<div class="t g" style="left:1491.8px;top:793.91px;font-size:19px;line-height:23px;font-weight:400;color:#5a5a5a;">0</div>
<svg class="a" style="left:1507.1px;top:793.3px;" width="24" height="24" viewBox="0 0 24 24" fill="none"><g stroke="#5a5a5a" stroke-width="1.7" fill="none" stroke-linecap="round"><rect x="3" y="3" width="7" height="7" rx="2.4"/><rect x="13.5" y="3" width="7" height="7" rx="2.4"/><rect x="3" y="13.5" width="7" height="7" rx="2.4"/><path d="M17 13.3v8M13 17.3h8"/></g></svg>
<div class="t g" style="left:1533.2px;top:793.91px;font-size:19px;line-height:23px;font-weight:400;color:#5a5a5a;">,</div>
<svg class="a" style="left:1550.4px;top:798.6px;" width="7" height="14" viewBox="0 0 7 14" fill="none"><path d="M0.8 3.6L4.9 0.9V13.4" stroke="#5a5a5a" stroke-width="1.65" fill="none"/></svg>
<svg class="a" style="left:1561.8px;top:793.8px;" width="24" height="24" viewBox="0 0 24 24" fill="none"><g stroke="#5a5a5a" stroke-width="1.7" fill="none" stroke-linejoin="round"><rect x="2.5" y="10" width="19" height="11" rx="2.4"/><path d="M4.2 10V8a1.6 1.6 0 0 1 1.6-1.6h12.4a1.6 1.6 0 0 1 1.6 1.6v2M6 6.4V5a1.6 1.6 0 0 1 1.6-1.6h8.8A1.6 1.6 0 0 1 18 5v1.4"/></g></svg>
<div class="t g" style="left:1613.5px;top:793.91px;font-size:19px;line-height:23px;font-weight:400;color:#5a5a5a;letter-spacing:-0.112px;">Nov 17, 2025</div>
<svg class="a" style="left:1770px;top:796px;" width="15" height="17" viewBox="0 0 15 17" fill="none"><path d="M2 2.2a1.2 1.2 0 0 1 1.2-1.2h8.6a1.2 1.2 0 0 1 1.2 1.2V15L7.5 11.5 2 15z" stroke="#333" stroke-width="1.6" stroke-linejoin="round" fill="none"/></svg>
<svg class="a" style="left:1808.3px;top:799px;" width="4" height="14" viewBox="0 0 4 14" fill="none"><circle cx="1.7" cy="2.5" r="1.2" fill="#333"/><circle cx="1.7" cy="7" r="1.2" fill="#333"/><circle cx="1.7" cy="11.5" r="1.2" fill="#333"/></svg>
<div class="a" style="left:314px;top:886px;width:1518px;height:1px;background:#e6e6e6;"></div>
<div class="a" style="left:336px;top:850px;width:18px;height:18px;box-sizing:border-box;border:1.5px solid #555;border-radius:4px;background:#fff;"></div>
<div class="a" style="left:393px;top:841px;width:36px;height:36px;background:#d8f5ee;border-radius:9px;"></div>
<svg class="a" style="left:400.8px;top:848.8px;" width="20.6" height="20.6" viewBox="0 0 24 24" fill="none"><g stroke="#1e1e1e" stroke-width="1.95" fill="none" stroke-linejoin="round"><rect x="3" y="3" width="13" height="13" rx="3"/><path d="M8 8h10a3 3 0 0 1 3 3v7a3 3 0 0 1-3 3h-7a3 3 0 0 1-3-3z" fill="#d8f5ee"/></g></svg>
<div class="t g" style="left:446.5px;top:847.91px;font-size:19px;line-height:23px;font-weight:400;color:#2219b5;letter-spacing:0.449px;">Subscription &amp; Billing Agent</div>
<div class="t g" style="left:904px;top:847.91px;font-size:19px;line-height:23px;font-weight:400;color:#5a5a5a;letter-spacing:0.371px;">Jonathan Nie...</div>
<div class="t g" style="left:1084px;top:847.91px;font-size:19px;line-height:23px;font-weight:400;color:#5a5a5a;letter-spacing:0.25px;">Azure AI Foun...</div>
<svg class="a" style="left:1271.6px;top:851.4px;" width="16" height="16" viewBox="0 0 16 16" fill="none"><circle cx="8" cy="8" r="8" fill="#7b7b7b"/><path d="M9.9 4.3L4.1 9.7H7.3L5.7 13.5L11.5 8.1H8.3Z" fill="#fff" stroke="#fff" stroke-width=".9" stroke-linejoin="round"/></svg>
<div class="t g" style="left:1298.5px;top:847.91px;font-size:19px;line-height:23px;font-weight:400;color:#5a5a5a;letter-spacing:0.582px;">Unspecified</div>
<svg class="a" style="left:1434.7px;top:852.6px;" width="7" height="14" viewBox="0 0 7 14" fill="none"><path d="M0.8 3.6L4.9 0.9V13.4" stroke="#5a5a5a" stroke-width="1.65" fill="none"/></svg>
<svg class="a" style="left:1444.7px;top:845.6px;" width="24" height="24" viewBox="0 0 24 24" fill="none"><path d="M2.6 19.4L11.2 10.8C10.4 8.6 11 6.1 12.8 4.6C14.3 3.3 16.5 2.9 18.3 3.6L15.5 6.4L16 8.7L18.3 9.2L21.1 6.4C21.8 8.2 21.4 10.4 20.1 11.9C18.6 13.7 16.1 14.3 13.9 13.5L5.4 22.1C4.6 22.9 3.4 22.9 2.6 22.1C1.8 21.3 1.8 20.2 2.6 19.4Z" stroke="#5a5a5a" stroke-width="1.7" stroke-linejoin="round" fill="none"/><circle cx="4" cy="20.7" r=".7" fill="#5a5a5a"/></svg>
<div class="t g" style="left:1471.2px;top:847.91px;font-size:19px;line-height:23px;font-weight:400;color:#5a5a5a;">,</div>
<svg class="a" style="left:1488.5px;top:852.6px;" width="7" height="14" viewBox="0 0 7 14" fill="none"><path d="M0.8 3.6L4.9 0.9V13.4" stroke="#5a5a5a" stroke-width="1.65" fill="none"/></svg>
<svg class="a" style="left:1498.9px;top:847.3px;" width="24" height="24" viewBox="0 0 24 24" fill="none"><g stroke="#5a5a5a" stroke-width="1.7" fill="none" stroke-linecap="round"><rect x="3" y="3" width="7" height="7" rx="2.4"/><rect x="13.5" y="3" width="7" height="7" rx="2.4"/><rect x="3" y="13.5" width="7" height="7" rx="2.4"/><path d="M17 13.3v8M13 17.3h8"/></g></svg>
<div class="t g" style="left:1525.0px;top:847.91px;font-size:19px;line-height:23px;font-weight:400;color:#5a5a5a;">,</div>
<div class="t g" style="left:1541.4px;top:847.91px;font-size:19px;line-height:23px;font-weight:400;color:#5a5a5a;">0</div>
<svg class="a" style="left:1557.7px;top:847.8px;" width="24" height="24" viewBox="0 0 24 24" fill="none"><g stroke="#5a5a5a" stroke-width="1.7" fill="none" stroke-linejoin="round"><rect x="2.5" y="10" width="19" height="11" rx="2.4"/><path d="M4.2 10V8a1.6 1.6 0 0 1 1.6-1.6h12.4a1.6 1.6 0 0 1 1.6 1.6v2M6 6.4V5a1.6 1.6 0 0 1 1.6-1.6h8.8A1.6 1.6 0 0 1 18 5v1.4"/></g></svg>
<div class="t g" style="left:1613.5px;top:847.91px;font-size:19px;line-height:23px;font-weight:400;color:#5a5a5a;letter-spacing:0.161px;">Dec 18, 2025</div>
<svg class="a" style="left:1770px;top:850px;" width="15" height="17" viewBox="0 0 15 17" fill="none"><path d="M2 2.2a1.2 1.2 0 0 1 1.2-1.2h8.6a1.2 1.2 0 0 1 1.2 1.2V15L7.5 11.5 2 15z" stroke="#333" stroke-width="1.6" stroke-linejoin="round" fill="none"/></svg>
<svg class="a" style="left:1808.3px;top:853px;" width="4" height="14" viewBox="0 0 4 14" fill="none"><circle cx="1.7" cy="2.5" r="1.2" fill="#333"/><circle cx="1.7" cy="7" r="1.2" fill="#333"/><circle cx="1.7" cy="11.5" r="1.2" fill="#333"/></svg>
<div class="a" style="left:314px;top:940px;width:1518px;height:1px;background:#e6e6e6;"></div>
<div class="a" style="left:336px;top:904px;width:18px;height:18px;box-sizing:border-box;border:1.5px solid #555;border-radius:4px;background:#fff;"></div>
<div class="a" style="left:393px;top:895px;width:36px;height:36px;background:#d8f5ee;border-radius:9px;"></div>
<svg class="a" style="left:400.8px;top:902.8px;" width="20.6" height="20.6" viewBox="0 0 24 24" fill="none"><g stroke="#1e1e1e" stroke-width="1.95" fill="none" stroke-linejoin="round"><rect x="3" y="3" width="13" height="13" rx="3"/><path d="M8 8h10a3 3 0 0 1 3 3v7a3 3 0 0 1-3 3h-7a3 3 0 0 1-3-3z" fill="#d8f5ee"/></g></svg>
<div class="t g" style="left:446.5px;top:901.91px;font-size:19px;line-height:23px;font-weight:400;color:#2219b5;letter-spacing:0.449px;">Compliance &amp; Security Assistant</div>
<div class="t g" style="left:904px;top:901.91px;font-size:19px;line-height:23px;font-weight:400;color:#5a5a5a;letter-spacing:0.371px;">Jonathan Nie...</div>
<div class="t g" style="left:1084px;top:901.91px;font-size:19px;line-height:23px;font-weight:400;color:#5a5a5a;letter-spacing:0.25px;">Azure AI Foun...</div>
<svg class="a" style="left:1271.6px;top:905.4px;" width="16" height="16" viewBox="0 0 16 16" fill="none"><circle cx="8" cy="8" r="8" fill="#7b7b7b"/><path d="M9.9 4.3L4.1 9.7H7.3L5.7 13.5L11.5 8.1H8.3Z" fill="#fff" stroke="#fff" stroke-width=".9" stroke-linejoin="round"/></svg>
<div class="t g" style="left:1298.5px;top:901.91px;font-size:19px;line-height:23px;font-weight:400;color:#5a5a5a;letter-spacing:0.582px;">Unspecified</div>
<div class="t g" style="left:1433.9px;top:901.91px;font-size:19px;line-height:23px;font-weight:400;color:#5a5a5a;">0</div>
<svg class="a" style="left:1448.8px;top:899.6px;" width="24" height="24" viewBox="0 0 24 24" fill="none"><path d="M2.6 19.4L11.2 10.8C10.4 8.6 11 6.1 12.8 4.6C14.3 3.3 16.5 2.9 18.3 3.6L15.5 6.4L16 8.7L18.3 9.2L21.1 6.4C21.8 8.2 21.4 10.4 20.1 11.9C18.6 13.7 16.1 14.3 13.9 13.5L5.4 22.1C4.6 22.9 3.4 22.9 2.6 22.1C1.8 21.3 1.8 20.2 2.6 19.4Z" stroke="#5a5a5a" stroke-width="1.7" stroke-linejoin="round" fill="none"/><circle cx="4" cy="20.7" r=".7" fill="#5a5a5a"/></svg>
<div class="t g" style="left:1475.3px;top:901.91px;font-size:19px;line-height:23px;font-weight:400;color:#5a5a5a;">,</div>
<svg class="a" style="left:1492.6px;top:906.6px;" width="7" height="14" viewBox="0 0 7 14" fill="none"><path d="M0.8 3.6L4.9 0.9V13.4" stroke="#5a5a5a" stroke-width="1.65" fill="none"/></svg>
<svg class="a" style="left:1503.0px;top:901.3px;" width="24" height="24" viewBox="0 0 24 24" fill="none"><g stroke="#5a5a5a" stroke-width="1.7" fill="none" stroke-linecap="round"><rect x="3" y="3" width="7" height="7" rx="2.4"/><rect x="13.5" y="3" width="7" height="7" rx="2.4"/><rect x="3" y="13.5" width="7" height="7" rx="2.4"/><path d="M17 13.3v8M13 17.3h8"/></g></svg>
<div class="t g" style="left:1529.1px;top:901.91px;font-size:19px;line-height:23px;font-weight:400;color:#5a5a5a;">,</div>
<div class="t g" style="left:1545.5px;top:901.91px;font-size:19px;line-height:23px;font-weight:400;color:#5a5a5a;">0</div>
<svg class="a" style="left:1561.8px;top:901.8px;" width="24" height="24" viewBox="0 0 24 24" fill="none"><g stroke="#5a5a5a" stroke-width="1.7" fill="none" stroke-linejoin="round"><rect x="2.5" y="10" width="19" height="11" rx="2.4"/><path d="M4.2 10V8a1.6 1.6 0 0 1 1.6-1.6h12.4a1.6 1.6 0 0 1 1.6 1.6v2M6 6.4V5a1.6 1.6 0 0 1 1.6-1.6h8.8A1.6 1.6 0 0 1 18 5v1.4"/></g></svg>
<div class="t g" style="left:1613.5px;top:901.91px;font-size:19px;line-height:23px;font-weight:400;color:#5a5a5a;letter-spacing:0.383px;">Dec 3, 2025</div>
<svg class="a" style="left:1770px;top:904px;" width="15" height="17" viewBox="0 0 15 17" fill="none"><path d="M2 2.2a1.2 1.2 0 0 1 1.2-1.2h8.6a1.2 1.2 0 0 1 1.2 1.2V15L7.5 11.5 2 15z" stroke="#333" stroke-width="1.6" stroke-linejoin="round" fill="none"/></svg>
<svg class="a" style="left:1808.3px;top:907px;" width="4" height="14" viewBox="0 0 4 14" fill="none"><circle cx="1.7" cy="2.5" r="1.2" fill="#333"/><circle cx="1.7" cy="7" r="1.2" fill="#333"/><circle cx="1.7" cy="11.5" r="1.2" fill="#333"/></svg>
<div class="a" style="left:314px;top:994px;width:1518px;height:1px;background:#e6e6e6;"></div>
<div class="a" style="left:336px;top:958px;width:18px;height:18px;box-sizing:border-box;border:1.5px solid #555;border-radius:4px;background:#fff;"></div>
<div class="a" style="left:393px;top:949px;width:36px;height:36px;background:#d8f5ee;border-radius:9px;"></div>
<svg class="a" style="left:400.8px;top:956.8px;" width="20.6" height="20.6" viewBox="0 0 24 24" fill="none"><g stroke="#1e1e1e" stroke-width="1.95" fill="none" stroke-linejoin="round"><rect x="3" y="3" width="13" height="13" rx="3"/><path d="M8 8h10a3 3 0 0 1 3 3v7a3 3 0 0 1-3 3h-7a3 3 0 0 1-3-3z" fill="#d8f5ee"/></g></svg>
<div class="t g" style="left:446.5px;top:955.91px;font-size:19px;line-height:23px;font-weight:400;color:#2219b5;letter-spacing:0.5px;">Lead Qualification Agent</div>
<div class="t g" style="left:904px;top:955.91px;font-size:19px;line-height:23px;font-weight:400;color:#5a5a5a;letter-spacing:0.371px;">Jonathan Nie...</div>
<div class="t g" style="left:1084px;top:955.91px;font-size:19px;line-height:23px;font-weight:400;color:#5a5a5a;letter-spacing:0.25px;">Azure AI Foun...</div>
<svg class="a" style="left:1271.6px;top:959.4px;" width="16" height="16" viewBox="0 0 16 16" fill="none"><circle cx="8" cy="8" r="8" fill="#7b7b7b"/><path d="M9.9 4.3L4.1 9.7H7.3L5.7 13.5L11.5 8.1H8.3Z" fill="#fff" stroke="#fff" stroke-width=".9" stroke-linejoin="round"/></svg>
<div class="t g" style="left:1298.5px;top:955.91px;font-size:19px;line-height:23px;font-weight:400;color:#5a5a5a;letter-spacing:0.582px;">Unspecified</div>
<svg class="a" style="left:1434.7px;top:960.6px;" width="7" height="14" viewBox="0 0 7 14" fill="none"><path d="M0.8 3.6L4.9 0.9V13.4" stroke="#5a5a5a" stroke-width="1.65" fill="none"/></svg>
<svg class="a" style="left:1444.7px;top:953.6px;" width="24" height="24" viewBox="0 0 24 24" fill="none"><path d="M2.6 19.4L11.2 10.8C10.4 8.6 11 6.1 12.8 4.6C14.3 3.3 16.5 2.9 18.3 3.6L15.5 6.4L16 8.7L18.3 9.2L21.1 6.4C21.8 8.2 21.4 10.4 20.1 11.9C18.6 13.7 16.1 14.3 13.9 13.5L5.4 22.1C4.6 22.9 3.4 22.9 2.6 22.1C1.8 21.3 1.8 20.2 2.6 19.4Z" stroke="#5a5a5a" stroke-width="1.7" stroke-linejoin="round" fill="none"/><circle cx="4" cy="20.7" r=".7" fill="#5a5a5a"/></svg>
<div class="t g" style="left:1471.2px;top:955.91px;font-size:19px;line-height:23px;font-weight:400;color:#5a5a5a;">,</div>
<svg class="a" style="left:1488.5px;top:960.6px;" width="7" height="14" viewBox="0 0 7 14" fill="none"><path d="M0.8 3.6L4.9 0.9V13.4" stroke="#5a5a5a" stroke-width="1.65" fill="none"/></svg>
<svg class="a" style="left:1498.9px;top:955.3px;" width="24" height="24" viewBox="0 0 24 24" fill="none"><g stroke="#5a5a5a" stroke-width="1.7" fill="none" stroke-linecap="round"><rect x="3" y="3" width="7" height="7" rx="2.4"/><rect x="13.5" y="3" width="7" height="7" rx="2.4"/><rect x="3" y="13.5" width="7" height="7" rx="2.4"/><path d="M17 13.3v8M13 17.3h8"/></g></svg>
<div class="t g" style="left:1525.0px;top:955.91px;font-size:19px;line-height:23px;font-weight:400;color:#5a5a5a;">,</div>
<div class="t g" style="left:1541.4px;top:955.91px;font-size:19px;line-height:23px;font-weight:400;color:#5a5a5a;">0</div>
<svg class="a" style="left:1557.7px;top:955.8px;" width="24" height="24" viewBox="0 0 24 24" fill="none"><g stroke="#5a5a5a" stroke-width="1.7" fill="none" stroke-linejoin="round"><rect x="2.5" y="10" width="19" height="11" rx="2.4"/><path d="M4.2 10V8a1.6 1.6 0 0 1 1.6-1.6h12.4a1.6 1.6 0 0 1 1.6 1.6v2M6 6.4V5a1.6 1.6 0 0 1 1.6-1.6h8.8A1.6 1.6 0 0 1 18 5v1.4"/></g></svg>
<div class="t g" style="left:1613.5px;top:955.91px;font-size:19px;line-height:23px;font-weight:400;color:#5a5a5a;letter-spacing:0.383px;">Dec 3, 2025</div>
<svg class="a" style="left:1770px;top:958px;" width="15" height="17" viewBox="0 0 15 17" fill="none"><path d="M2 2.2a1.2 1.2 0 0 1 1.2-1.2h8.6a1.2 1.2 0 0 1 1.2 1.2V15L7.5 11.5 2 15z" stroke="#333" stroke-width="1.6" stroke-linejoin="round" fill="none"/></svg>
<svg class="a" style="left:1808.3px;top:961px;" width="4" height="14" viewBox="0 0 4 14" fill="none"><circle cx="1.7" cy="2.5" r="1.2" fill="#333"/><circle cx="1.7" cy="7" r="1.2" fill="#333"/><circle cx="1.7" cy="11.5" r="1.2" fill="#333"/></svg>
<div class="a" style="left:0px;top:999px;width:1899px;height:3px;background:#4b4d53;"></div>
<div class="a" style="left:0px;top:995px;width:7px;height:4px;background:radial-gradient(7px 4px at 7px 0, rgba(75,77,83,0) 92%, #4b4d53 100%);"></div>
<div class="a" style="left:1892px;top:995px;width:7px;height:4px;background:radial-gradient(7px 4px at 0 0, rgba(75,77,83,0) 92%, #4b4d53 100%);"></div>
</body></html>
